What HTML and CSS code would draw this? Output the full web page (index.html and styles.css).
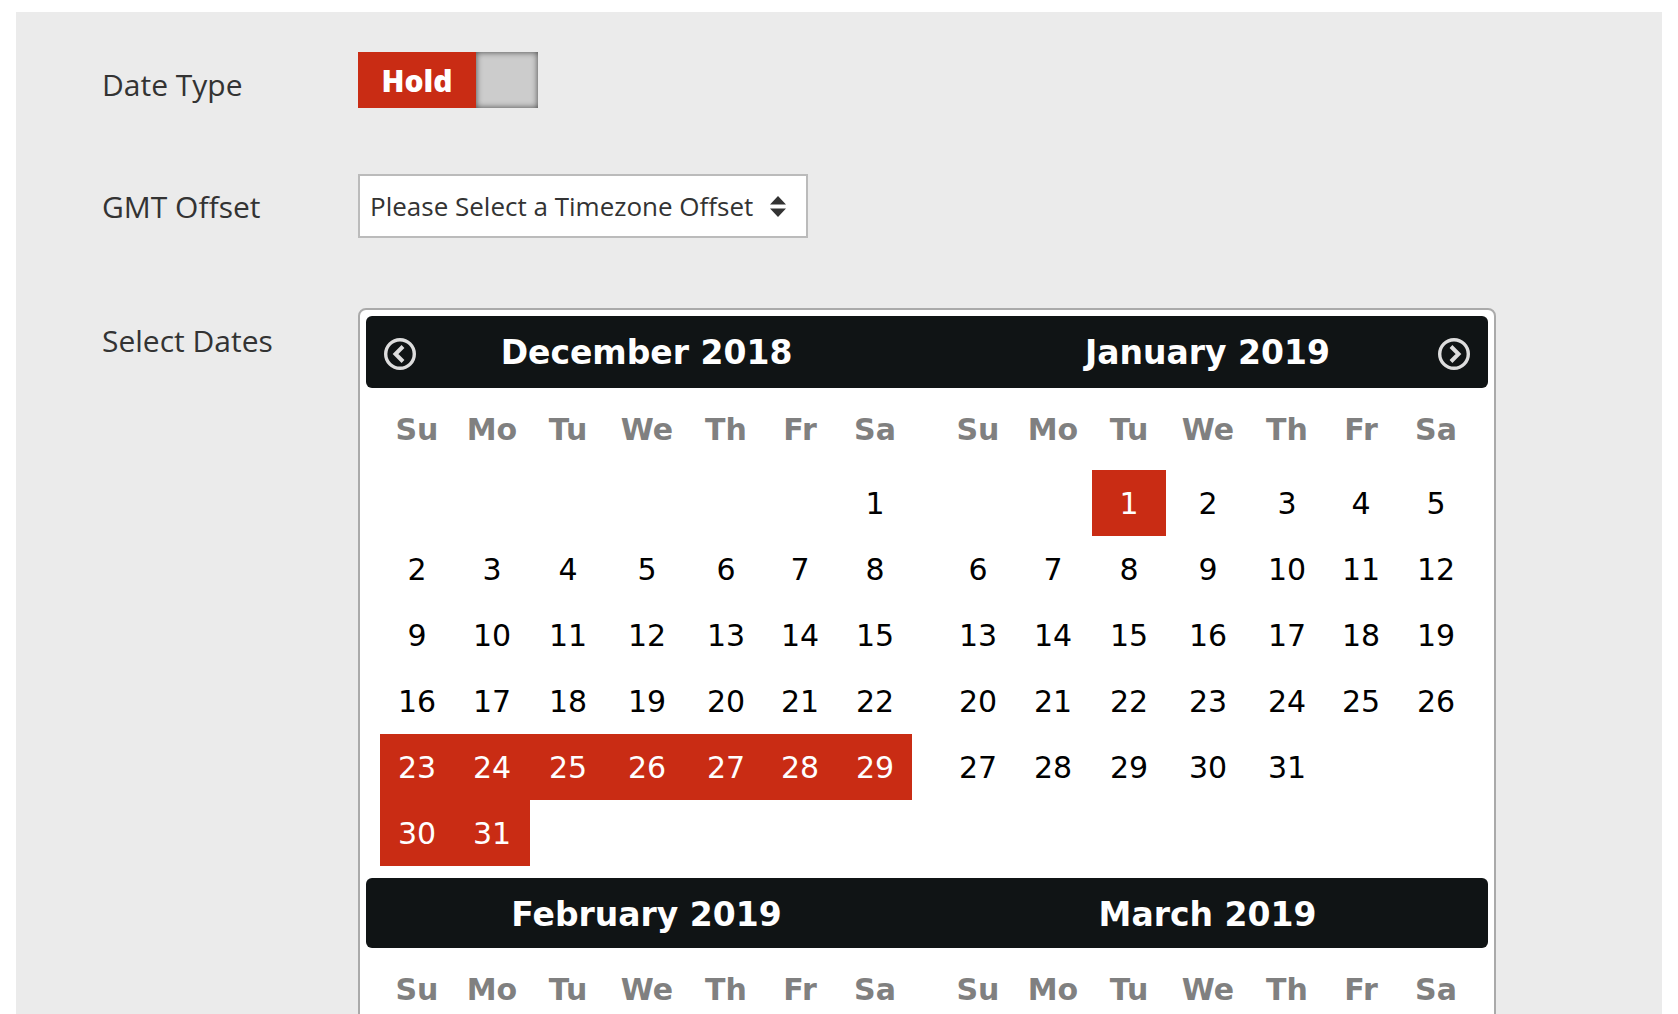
FILE: index.html
```html
<!DOCTYPE html>
<html lang="en">
<head>
    <meta charset="UTF-8">
    <title>Add Dates</title>
    <link rel="stylesheet" href="styles.css">
</head>
<body>
    <main class="panel">
        <div class="form-row row-type">
            <div class="label">Date Type</div>
            <div class="toggle">
                <span class="toggle-on">Hold</span>
                <span class="toggle-off"></span>
            </div>
        </div>

        <div class="form-row row-offset">
            <div class="label">GMT Offset</div>
            <div class="select">
                <span>Please Select a Timezone Offset</span>
                <svg class="select-arrows" width="16" height="21" viewBox="0 0 16 21">
                    <path d="M8 0L16 8.500H0Z M0 12.500H16L8 21Z" fill="#333"/>
                </svg>
            </div>
        </div>

        <div class="form-row row-dates">
            <div class="label">Select Dates</div>
            <div class="calendar">
                <div class="month-bar first">
                    <svg class="nav nav-prev" width="32" height="32" viewBox="0 0 32 32">
                        <circle cx="16" cy="16" r="14.300" fill="none" stroke="#ddd" stroke-width="3.400"/>
                        <path d="M19 8.500L11.500 16L19 23.500" fill="none" stroke="#ddd" stroke-width="4"/>
                    </svg>
                    <div class="month-title">December 2018</div>
                    <div class="month-title">January 2019</div>
                    <svg class="nav nav-next" width="32" height="32" viewBox="0 0 32 32">
                        <circle cx="16" cy="16" r="14.300" fill="none" stroke="#ddd" stroke-width="3.400"/>
                        <path d="M13 8.500L20.500 16L13 23.500" fill="none" stroke="#ddd" stroke-width="4"/>
                    </svg>
                </div>
                <div class="months">
                    <div class="month">
                        <div class="dow">Su</div><div class="dow">Mo</div><div class="dow">Tu</div><div class="dow">We</div><div class="dow">Th</div><div class="dow">Fr</div><div class="dow">Sa</div>
                        <div class="day"></div><div class="day"></div><div class="day"></div><div class="day"></div><div class="day"></div><div class="day"></div><div class="day">1</div>
                        <div class="day">2</div><div class="day">3</div><div class="day">4</div><div class="day">5</div><div class="day">6</div><div class="day">7</div><div class="day">8</div>
                        <div class="day">9</div><div class="day">10</div><div class="day">11</div><div class="day">12</div><div class="day">13</div><div class="day">14</div><div class="day">15</div>
                        <div class="day">16</div><div class="day">17</div><div class="day">18</div><div class="day">19</div><div class="day">20</div><div class="day">21</div><div class="day">22</div>
                        <div class="day active">23</div><div class="day active">24</div><div class="day active">25</div><div class="day active">26</div><div class="day active">27</div><div class="day active">28</div><div class="day active">29</div>
                        <div class="day active">30</div><div class="day active">31</div>
                    </div>
                    <div class="month">
                        <div class="dow">Su</div><div class="dow">Mo</div><div class="dow">Tu</div><div class="dow">We</div><div class="dow">Th</div><div class="dow">Fr</div><div class="dow">Sa</div>
                        <div class="day"></div><div class="day"></div><div class="day active">1</div><div class="day">2</div><div class="day">3</div><div class="day">4</div><div class="day">5</div>
                        <div class="day">6</div><div class="day">7</div><div class="day">8</div><div class="day">9</div><div class="day">10</div><div class="day">11</div><div class="day">12</div>
                        <div class="day">13</div><div class="day">14</div><div class="day">15</div><div class="day">16</div><div class="day">17</div><div class="day">18</div><div class="day">19</div>
                        <div class="day">20</div><div class="day">21</div><div class="day">22</div><div class="day">23</div><div class="day">24</div><div class="day">25</div><div class="day">26</div>
                        <div class="day">27</div><div class="day">28</div><div class="day">29</div><div class="day">30</div><div class="day">31</div>
                    </div>
                </div>
                <div class="month-bar second">
                    <div class="month-title">February 2019</div>
                    <div class="month-title">March 2019</div>
                </div>
                <div class="months">
                    <div class="month">
                        <div class="dow">Su</div><div class="dow">Mo</div><div class="dow">Tu</div><div class="dow">We</div><div class="dow">Th</div><div class="dow">Fr</div><div class="dow">Sa</div>
                    </div>
                    <div class="month">
                        <div class="dow">Su</div><div class="dow">Mo</div><div class="dow">Tu</div><div class="dow">We</div><div class="dow">Th</div><div class="dow">Fr</div><div class="dow">Sa</div>
                    </div>
                </div>
            </div>
        </div>
    </main>
</body>
</html>
```

FILE: styles.css
```css
body {
    margin: 0;
    padding: 12px 16px 0;
    box-sizing: border-box;
    height: 100vh;
    overflow: hidden;
    background: #fff;
    font-family: 'Open Sans', sans-serif;
    color: #333;
}

.panel {
    height: 100%;
    background: #ebebeb;
    padding: 40px 0 0 86px;
}

.form-row {
    display: flex;
    align-items: flex-start;
}

.row-type {
    margin-bottom: 66px;
}

.row-offset {
    margin-bottom: 70px;
}

.label {
    width: 256px;
    flex-shrink: 0;
    margin-top: 14px;
    font-size: 30px;
    line-height: 38px;
}

/* toggle */
.toggle {
    display: flex;
    width: 180px;
    height: 56px;
}

.toggle-on {
    width: 118px;
    background: #c92c14;
    color: #fff;
    font-weight: 800;
    font-size: 30px;
    line-height: 58px;
    text-align: center;
}

.toggle-off {
    flex: 1;
    background: #ccc;
    box-shadow: inset 0 0 6px #444;
}

/* select */
.select {
    display: flex;
    align-items: center;
    justify-content: space-between;
    box-sizing: border-box;
    width: 450px;
    height: 64px;
    padding: 0 20px 0 10px;
    background: #fff;
    border: 2px solid #bbb;
    font-size: 26px;
}

.select-arrows {
    display: block;
}

/* calendar */
.calendar {
    width: 1122px;
    padding: 6px;
    background: #fff;
    border: 2px solid #aaa;
    border-radius: 8px;
    font-family: 'DejaVu Sans', sans-serif;
}

.month-bar {
    position: relative;
    display: flex;
    background: #101415;
    border-radius: 6px;
}

.month-bar.first {
    height: 72px;
}

.month-bar.second {
    height: 70px;
    margin-top: 12px;
}

.month-title {
    width: 561px;
    box-sizing: border-box;
    color: #fff;
    font-weight: 700;
    font-size: 33px;
    text-align: center;
    line-height: 74px;
}

.nav {
    position: absolute;
    top: 22px;
}

.nav-prev {
    left: 18px;
}

.nav-next {
    right: 18px;
}

.months {
    display: flex;
}

.month {
    display: grid;
    grid-template-columns: 72px 78px 74px 84px 74px 74px 76px;
    grid-template-rows: 82px;
    grid-auto-rows: 66px;
    align-content: start;
    width: 561px;
    padding-left: 14px;
    box-sizing: border-box;
}

.month + .month {
    padding-left: 15px;
}

.month:first-child .dow,
.month:first-child .day {
    padding-left: 2px;
}

.dow {
    color: #808080;
    font-weight: 700;
    font-size: 30px;
    line-height: 84px;
    text-align: center;
}

.day {
    color: #000;
    font-size: 30px;
    line-height: 68px;
    text-align: center;
}

.day.active {
    background: #c92c14;
    color: #fff;
}
```
